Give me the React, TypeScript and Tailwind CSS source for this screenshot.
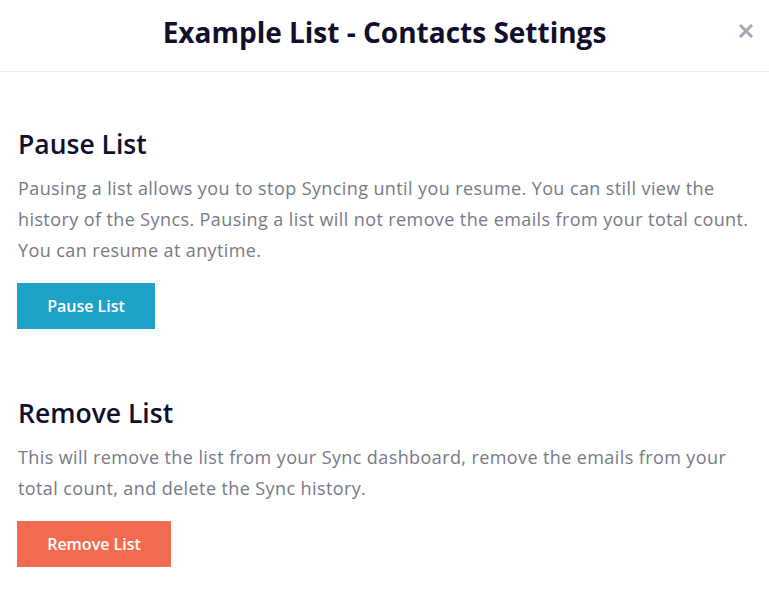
import React from "react";

export default function App() {
  return (
    <div className="w-[769px] h-[595px] bg-white" style={{ fontFamily: "'Open Sans', 'Noto Sans', sans-serif" }}>
      <div className="relative h-[72px] border-b border-[#ececf0] flex items-start justify-center pt-[12px]">
        <h1 className="text-[28px] leading-[40px] font-bold text-[#110f2c]">Example List - Contacts Settings</h1>
        <button className="absolute right-[16px] top-[24px] text-[#a3a6b3]">
          <svg width="14" height="14" viewBox="0 0 14 14">
            <path d="M2 2 L12 12 M12 2 L2 12" stroke="currentColor" strokeWidth="3" strokeLinecap="square" />
          </svg>
        </button>
      </div>
      <div className="px-[18px] pt-[56px]">
        <h2 className="text-[26.5px] font-semibold text-[#110f2c] leading-[32px]">Pause List</h2>
        <p className="mt-[13px] text-[18px] tracking-[0.4px] leading-[31px] text-[#767a88]">
          Pausing a list allows you to stop Syncing until you resume. You can still view the history of the Syncs. Pausing a list will not remove the emails from your total count. You can resume at anytime.
        </p>
        <button className="mt-[17px] -ml-px w-[138px] h-[46px] bg-[#1fa2c8] text-white text-[16px] font-semibold">Pause List</button>
        <h2 className="mt-[68px] text-[26.5px] font-semibold text-[#110f2c] leading-[32px]">Remove List</h2>
        <p className="mt-[13px] text-[18px] tracking-[0.4px] leading-[31px] text-[#767a88]">
          This will remove the list from your Sync dashboard, remove the emails from your total count, and delete the Sync history.
        </p>
        <button className="mt-[17px] -ml-px w-[154px] h-[46px] bg-[#f26a50] text-white text-[16px] font-semibold">Remove List</button>
      </div>
    </div>
  );
}
